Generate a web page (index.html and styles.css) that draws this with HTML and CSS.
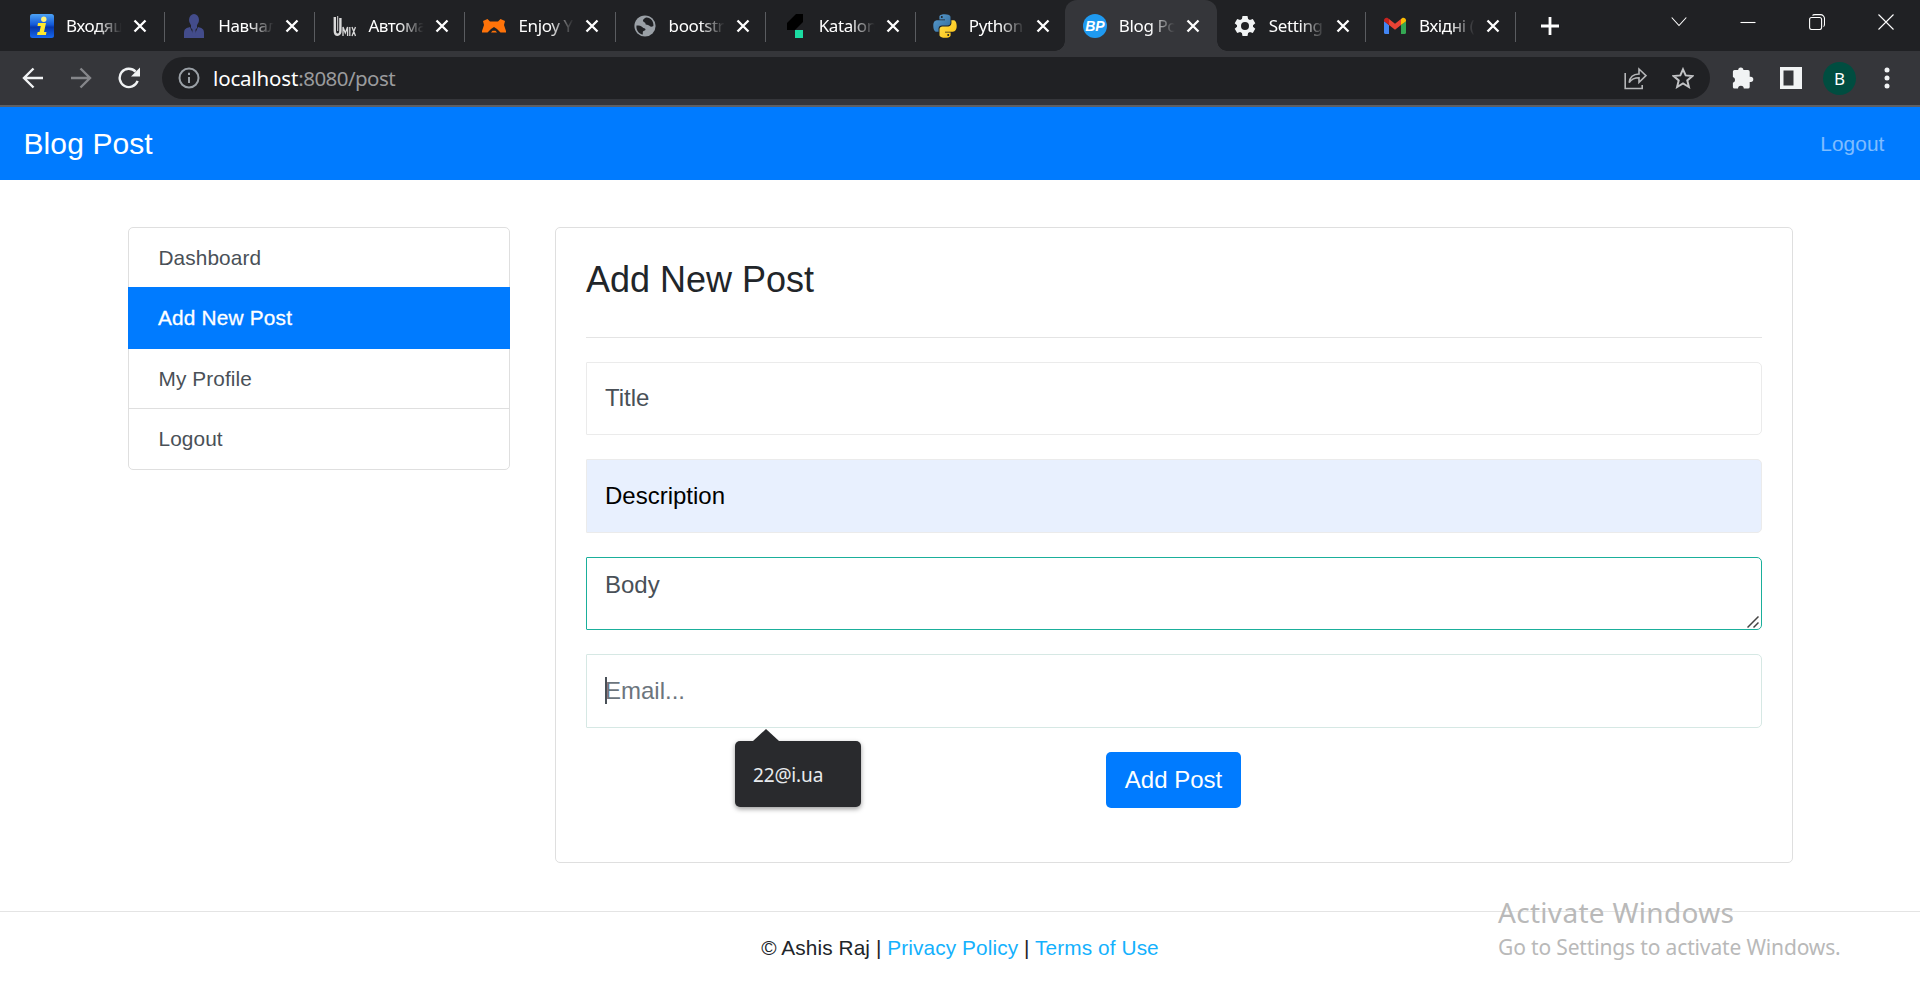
FILE: index.html
```html
<!DOCTYPE html>
<html lang="en">
<head>
<meta charset="utf-8">
<title>Blog Post</title>
<link rel="stylesheet" href="styles.css">
</head>
<body>
<header class="browser">
  <div class="tabstrip">
    <div class="tab tab-first">
      <svg class="favicon" viewBox="0 0 24 24"><defs><linearGradient id="ig" x1="0" y1="0" x2="0" y2="1"><stop offset="0" stop-color="#4da3f5"/><stop offset=".45" stop-color="#1258d8"/><stop offset=".55" stop-color="#0636a8"/><stop offset="1" stop-color="#1668f0"/></linearGradient></defs><rect width="24" height="24" rx="2.5" fill="url(#ig)"/><circle cx="13.8" cy="5.3" r="2.7" fill="#fff27a"/><path d="M8 9h8l-2 9h2.500l-.6 3H7l.7-3h1.800l1.300-6H7.500z" fill="#ffe92e"/></svg>
      <span class="tab-title">Входящ</span><svg class="close" viewBox="0 0 14 14"><path d="M1.500 1.500l11 11M12.500 1.500l-11 11"/></svg>
    </div>
    <div class="tab">
      <svg class="favicon" viewBox="0 0 24 24"><g fill="#434c8b"><ellipse cx="12" cy="6" rx="5" ry="6"/><path d="M9 9h6v5l-3 3-3-3z"/><path d="M2 24v-5c0-4 2-5 6-6l4 9 4-9c4 1 6 2 6 6v5z"/><path d="M10.800 14.500h2.400l1 7-2.200 2.500-2.200-2.500z"/></g></svg>
      <span class="tab-title">Навчал</span><svg class="close" viewBox="0 0 14 14"><path d="M1.500 1.500l11 11M12.500 1.500l-11 11"/></svg>
    </div>
    <div class="tab">
      <svg class="favicon" viewBox="0 0 24 24"><g fill="none" stroke="#d9d9d9"><path stroke-width="2.400" d="M2.800 3v14c0 5 5.600 5 5.600 0V4"/><path stroke-width="1" d="M5.700 2v15"/><path stroke-width="1.300" d="M11 22v-9l2.300 6 2.300-6v9M17.800 13v9M20 13l3.500 9M23.500 13L20 22"/></g></svg>
      <span class="tab-title">Автома</span><svg class="close" viewBox="0 0 14 14"><path d="M1.500 1.500l11 11M12.500 1.500l-11 11"/></svg>
    </div>
    <div class="tab">
      <svg class="favicon" viewBox="0 0 24 24"><path fill="#ff7309" d="M1 7l4.500-2 2.500 2.500h8L18.500 5 23 7l-1 4 2 6v1.500h-5.500L15 15l-3-2-3 2-3.500 3.500H0V17l2-6zM9 18.500l1.500-1.800h3L15 18.500z"/></svg>
      <span class="tab-title">Enjoy Y</span><svg class="close" viewBox="0 0 14 14"><path d="M1.500 1.500l11 11M12.500 1.500l-11 11"/></svg>
    </div>
    <div class="tab">
      <svg class="favicon" viewBox="0 0 24 24"><circle cx="12" cy="12" r="10.600" fill="#9aa0a6"/><path fill="#202124" d="M3.500 11.500c2.500 0 5 .3 6 1.800 1 1.300 3 .8 3 2.300s-2.700 1.200-2.700 2.700v2.300C6 20 2.800 16 3.500 11.500zM13 3.600c-2.500 1-3.700 3-2.700 4 1.200 1.200 2.200.8 2.200 2.200 0 1.800 3 .6 4.200 2.100.9 1.100 2.300.8 3.700.2C21 7 17 3 13 3.600z"/></svg>
      <span class="tab-title">bootstr</span><svg class="close" viewBox="0 0 14 14"><path d="M1.500 1.500l11 11M12.500 1.500l-11 11"/></svg>
    </div>
    <div class="tab">
      <svg class="favicon" viewBox="0 0 24 24"><path fill="#000" d="M4 9L13 0h7v8l-8 8H4z"/><path fill="#1bdca2" d="M12 16h8v8h-8z"/></svg>
      <span class="tab-title">Katalon</span><svg class="close" viewBox="0 0 14 14"><path d="M1.500 1.500l11 11M12.500 1.500l-11 11"/></svg>
    </div>
    <div class="tab tab-plain">
      <svg class="favicon" viewBox="0 0 24 24"><defs><linearGradient id="pyb" x2="1" y2="1"><stop stop-color="#5a9fd4"/><stop offset="1" stop-color="#306998"/></linearGradient><linearGradient id="pyy" x2="1" y2="1"><stop stop-color="#ffe04f"/><stop offset="1" stop-color="#fcc210"/></linearGradient></defs><path fill="url(#pyb)" d="M11.900.2C6 .2 6.400 2.800 6.400 2.800v2.700H12v.8H4.100S.3 5.900.3 11.900s3.300 5.800 3.300 5.800h2v-2.800s-.1-3.300 3.200-3.300h5.600s3.100.1 3.100-3V3.300S18 .2 11.900.2zM8.800 2a1 1 0 110 2 1 1 0 010-2z"/><path fill="url(#pyy)" d="M12.100 23.800c5.900 0 5.500-2.600 5.500-2.600v-2.700H12v-.8h7.900s3.800.4 3.800-5.600-3.300-5.800-3.300-5.800h-2v2.800s.1 3.300-3.200 3.300H9.600s-3.100-.1-3.100 3v5.300S6 23.800 12.100 23.800zm3.100-1.800a1 1 0 110-2 1 1 0 010 2z"/></svg>
      <span class="tab-title">Python</span><svg class="close" viewBox="0 0 14 14"><path d="M1.500 1.500l11 11M12.500 1.500l-11 11"/></svg>
    </div>
    <div class="tab tab-active">
      <span class="favicon bp">BP</span>
      <span class="tab-title">Blog Po</span><svg class="close" viewBox="0 0 14 14"><path d="M1.500 1.500l11 11M12.500 1.500l-11 11"/></svg>
    </div>
    <div class="tab">
      <svg class="favicon" viewBox="0 0 24 24"><path fill="#f1f3f4" fill-rule="evenodd" d="M9.500 2h5l.6 3 1.800 1 2.900-1 2.500 4.200-2.300 2v1.600l2.300 2-2.500 4.200-2.900-1-1.800 1-.6 3h-5l-.6-3-1.800-1-2.900 1-2.500-4.200 2.300-2v-1.600l-2.300-2L4.200 5l2.900 1 1.800-1zM12 8a4 4 0 100 8 4 4 0 000-8z"/></svg>
      <span class="tab-title">Setting</span><svg class="close" viewBox="0 0 14 14"><path d="M1.500 1.500l11 11M12.500 1.500l-11 11"/></svg>
    </div>
    <div class="tab">
      <svg class="favicon" viewBox="0 0 24 24"><path fill="#4285f4" d="M1 7l5 4v9H2.500A1.500 1.500 0 011 18.500z"/><path fill="#34a853" d="M23 7l-5 4v9h3.500a1.500 1.500 0 001.500-1.500z"/><path fill="#ea4335" d="M6 5l6 4.700L18 5v6l-6 4.700L6 11z"/><path fill="#c5221f" d="M1 6.500C1 4 3.500 3.100 5 4.200L6 5v6L1 7.300z"/><path fill="#fbbc04" d="M23 6.500c0-2.500-2.500-3.400-4-2.300L18 5v6l5-3.700z"/></svg>
      <span class="tab-title">Вхідні (</span><svg class="close" viewBox="0 0 14 14"><path d="M1.500 1.500l11 11M12.500 1.500l-11 11"/></svg>
    </div>
    <svg class="newtab" viewBox="0 0 18 18"><path d="M9 0v18M0 9h18"/></svg>
    <div class="winbtns">
      <svg viewBox="0 0 16 16"><path d="M.7 3.500L8 11.500l7.300-8"/></svg>
      <svg viewBox="0 0 16 16"><path d="M.5 8.500h15"/></svg>
      <svg viewBox="0 0 16 16"><rect x=".6" y="3.500" width="12" height="12" rx="2"/><path d="M3.500 1.500Q4 .6 6 .6h5.500a4 4 0 014 4V10q0 2-1 2.600"/></svg>
      <svg viewBox="0 0 16 16"><path d="M.5.500l15 15M15.500.500l-15 15"/></svg>
    </div>
  </div>
  <div class="toolbar">
    <svg class="nav-ic" viewBox="0 0 22 22"><path d="M21 11H2.500M11.500 1.500L2 11l9.500 9.500"/></svg>
    <svg class="nav-ic dim" viewBox="0 0 22 22"><path d="M1 11h18.500M10.500 1.500L20 11l-9.500 9.500"/></svg>
    <svg class="nav-ic" viewBox="0 0 22 22"><path d="M19.600 13.800A9.200 9.200 0 1 1 17.600 4.600"/><path d="M22 .5V9.500h-9z" fill="#f1f3f4" stroke="none"/></svg>
    <div class="omnibox">
      <svg class="info" viewBox="0 0 22 22"><circle cx="11" cy="11" r="9.500"/><path d="M11 10v6M11 5.800v2.300"/></svg>
      <span class="url"><b>localhost</b>:8080/post</span>
      <svg class="share" viewBox="0 0 23 23"><path d="M1.200 6v15.500h17V18M5.200 15.500c.6-5.500 4-8.300 9.800-8.500V2l7 6.700-7 6.600v-4.600c-4.500 0-7.500 1.300-9.800 4.800z"/></svg>
      <svg class="star" viewBox="0 0 22 22"><path d="M11 2.300l2.700 6.100 6.700.6-5.100 4.400 1.600 6.600-5.900-3.500L5.100 20l1.600-6.600L1.600 9l6.700-.6z"/></svg>
    </div>
    <svg class="ext" viewBox="0 0 22 22"><path fill="#f1f3f4" d="M2.500 3H6.200a2.600 2.600 0 015.200 0h4.600A1.700 1.700 0 0117.700 4.700V9.700h1a2.600 2.600 0 010 5.200h-1v5a1.700 1.700 0 01-1.700 1.700h-4.200a2.900 2.900 0 00-5.800 0H2.500A1.600 1.600 0 01.900 20v-4.300a2.900 2.900 0 000-5.600V4.600A1.600 1.600 0 012.500 3z"/></svg>
    <svg class="panel" viewBox="0 0 22 22"><path fill="#f1f3f4" fill-rule="evenodd" d="M0 0h22v22H0zM3.500 3.500v15h10v-15z"/></svg>
    <span class="avatar">B</span>
    <svg class="dots" viewBox="0 0 6 22"><g fill="#f1f3f4"><circle cx="3" cy="3" r="2.500"/><circle cx="3" cy="11" r="2.500"/><circle cx="3" cy="19" r="2.500"/></g></svg>
  </div>
</header>
<nav class="navbar"><a class="brand">Blog Post</a><a class="nav-link">Logout</a></nav>
<main class="content">
  <ul class="side">
    <li>Dashboard</li>
    <li class="active">Add New Post</li>
    <li>My Profile</li>
    <li>Logout</li>
  </ul>
  <section class="card">
    <h3>Add New Post</h3>
    <form class="form">
      <input class="field title" value="Title">
      <input class="field filled" value="Description">
      <div class="area-wrap">
        <textarea class="field area">Body</textarea>
        <svg class="grip" viewBox="0 0 12 12"><path d="M.5 11.500l11-11M6.500 11.500l5-5"/></svg>
      </div>
      <div class="email-wrap">
        <input class="field email" placeholder="Email...">
        <i class="caret"></i>
        <div class="suggest">22@i.ua</div>
      </div>
      <button class="btn" type="button">Add Post</button>
    </form>
  </section>
</main>
<footer class="footer">© Ashis Raj | <a>Privacy Policy</a> | <a>Terms of Use</a></footer>
<aside class="watermark"><p class="wm-title">Activate Windows</p><p class="wm-sub">Go to Settings to activate Windows.</p></aside>
</body>
</html>
```
FILE: styles.css
```css
* { box-sizing: border-box; }
body {
  margin: 0;
  height: 1008px;
  overflow: hidden;
  position: relative;
  background: #fff;
  color: #212529;
  font: 20.800px/30px "Liberation Sans", Arial, sans-serif;
  letter-spacing: .1px;
}
svg { display: block; flex: none; fill: none; }

/* Browser window */
.browser {
  font-family: "Noto Sans", "Open Sans", sans-serif;
  letter-spacing: 0;
  background: #202124;
}
.tabstrip { display: flex; height: 51px; padding-left: 13px; }
.tab {
  display: flex;
  align-items: center;
  flex: none;
  width: 150.1px;
  padding-left: 17px;
  position: relative;
}
.tab-first { width: 152.300px; }
.tab::after {
  content: "";
  position: absolute;
  right: 0;
  top: 12px;
  width: 1px;
  height: 30px;
  background: #5a5c60;
}
.tab-plain::after { display: none; }
.tab-active {
  background: #35363a;
  border-radius: 12px 12px 0 0;
  width: 152px;
  margin: 0 -1.500px 0 -.5px;
  padding-left: 17.500px;
}
.tab-active::before, .tab-active::after {
  content: "";
  position: absolute;
  top: auto;
  bottom: 0;
  width: 10px;
  height: 10px;
}
.tab-active::before { left: -10px; background: radial-gradient(circle at 0 0, transparent 9.5px, #35363a 10px); }
.tab-active::after { right: -10px; background: radial-gradient(circle at 100% 0, transparent 9.5px, #35363a 10px); }
.favicon { width: 24px; height: 24px; flex: none; }
.bp {
  border-radius: 50%;
  background: #1f9af0;
  color: #fff;
  font: italic bold 14px/24px "Liberation Sans", sans-serif;
  text-align: center;
}
.tab-title {
  width: 62px;
  margin-left: 12px;
  white-space: nowrap;
  color: #fff;
  font-size: 17px;
  line-height: 24px;
  letter-spacing: -.4px;
  -webkit-mask-image: linear-gradient(90deg, #000 50%, transparent 90%);
  mask-image: linear-gradient(90deg, #000 50%, transparent 90%);
}
.close { width: 14px; height: 14px; margin-left: 5px; stroke: #fff; stroke-width: 2.300; }
.newtab { width: 18px; height: 18px; margin: 17px 0 0 24.500px; stroke: #fff; stroke-width: 2.800; }
.winbtns { display: flex; gap: 53px; margin: 14px 26.500px 0 auto; }
.winbtns svg { width: 16px; height: 16px; stroke: #fff; stroke-width: 1.100; }
.toolbar {
  display: flex;
  align-items: center;
  height: 56px;
  padding-left: 22px;
  background: #35363a;
  border-bottom: 2px solid #5f6063;
}
.nav-ic { width: 22px; height: 22px; margin-right: 26px; stroke: #f1f3f4; stroke-width: 2.400; }
.dim { stroke: #85868a; }
.omnibox {
  display: flex;
  align-items: center;
  width: 1548px;
  height: 42px;
  margin-left: -4px;
  padding: 0 16px;
  border-radius: 21px;
  background: #202124;
}
.info { width: 22px; height: 22px; stroke: #9aa0a6; stroke-width: 2; }
.url { margin-left: 13px; color: #9a9b9d; font-size: 20.500px; letter-spacing: -.55px; }
.url b { color: #fff; font-weight: 400; letter-spacing: -.15px; }
.share { width: 23px; height: 23px; margin-left: auto; stroke: #b5b6b8; stroke-width: 1.600; }
.star { width: 22px; height: 22px; margin-left: 25px; stroke: #c2c3c5; stroke-width: 2; }
.ext { width: 22px; height: 22px; margin-left: 22px; }
.panel { width: 22px; height: 22px; margin-left: 26px; }
.avatar {
  width: 33px;
  height: 33px;
  margin-left: 21px;
  border-radius: 50%;
  background: #004d40;
  color: #fff;
  font-size: 17px;
  line-height: 33px;
  text-align: center;
}
.dots { width: 6px; height: 22px; margin-left: 28px; }

/* Page */
.navbar {
  display: flex;
  align-items: center;
  justify-content: space-between;
  height: 73px;
  padding: 0 35.500px 0 23.500px;
  background: #007bff;
}
.brand { color: #fff; font-size: 30px; }
.nav-link { color: rgba(255, 255, 255, .5); }
.content {
  display: flex;
  align-items: flex-start;
  gap: 45px;
  padding: 47px 127px 0 128px;
}
.side {
  width: 382px;
  margin: 0;
  padding: 0;
  list-style: none;
  border: 1px solid #dfdfdf;
  border-radius: 5px;
  background: #fff;
  color: #495057;
}
.side li { height: 60px; padding: 15px 29.500px 0; }
.side li:nth-child(3) { height: 59px; }
.side li:last-child { border-top: 1px solid #dfdfdf; height: 61px; }
.side .active {
  height: 62px;
  margin: -1px -1px 0;
  padding: 16px 30px 0;
  background: #007bff;
  color: #fff;
  letter-spacing: .2px;
  -webkit-text-stroke: .3px #fff;
}
.card {
  flex: 1;
  height: 636px;
  padding: 30px;
  border: 1px solid #dfdfdf;
  border-radius: 5px;
  background: #fff;
}
h3 {
  height: 80px;
  margin: 0;
  border-bottom: 1px solid #e4e4e4;
  font-size: 36px;
  font-weight: 400;
  line-height: 43px;
  letter-spacing: 0;
}
.form { display: flex; flex-direction: column; gap: 24px; padding-top: 24px; }
.field {
  display: block;
  width: 100%;
  height: 73px;
  margin: 0;
  padding: 0 18px;
  border: 1px solid #ebebeb;
  border-radius: 1px 5px 5px 1px;
  outline: 0;
  background: #fff;
  color: #495057;
  font: 24px/36px "Liberation Sans", Arial, sans-serif;
}
.title { padding-bottom: 2px; }
.filled { height: 74px; background: #e8f0fe; color: #000; }
.area-wrap, .email-wrap { position: relative; }
.area { padding-top: 9px; border-color: #1aaf9b; resize: none; overflow: hidden; }
.grip { position: absolute; right: 3px; bottom: 2px; width: 12px; height: 12px; stroke: #444; stroke-width: 1.500; }
.email { height: 74px; border-color: #d6e8e4; }
.email::placeholder { color: #6c757d; opacity: 1; }
.caret { position: absolute; left: 19px; top: 23px; width: 2px; height: 27px; background: #495057; }
.suggest {
  position: absolute;
  left: 149px;
  top: 87px;
  width: 126px;
  height: 66px;
  padding-left: 18px;
  border-radius: 5px;
  background: #292a2d;
  box-shadow: 0 2px 5px rgba(0, 0, 0, .4);
  color: #e8eaed;
  font: 19px/68px "Noto Sans", sans-serif;
  letter-spacing: -.15px;
}
.suggest::before {
  content: "";
  position: absolute;
  left: 18px;
  top: -12px;
  border: solid transparent;
  border-width: 0 13px 12px;
  border-bottom-color: #292a2d;
}
.btn {
  align-self: center;
  width: 135px;
  height: 56px;
  margin-right: 1px;
  padding: 0;
  border: 0;
  border-radius: 5px;
  background: #007bff;
  color: #fff;
  font: 24px/56px "Liberation Sans", Arial, sans-serif;
}
.footer {
  margin-top: 48px;
  padding-top: 21px;
  border-top: 1px solid #e4e4e4;
  text-align: center;
}
.footer a { color: #14b1fd; }
.watermark {
  position: absolute;
  left: 1498px;
  top: 892px;
  color: #b9b9b9;
  font-family: "Noto Sans", "Open Sans", sans-serif;
  white-space: nowrap;
}
.watermark p { margin: 0; }
.wm-title { font-size: 28px; line-height: 40px; letter-spacing: .3px; }
.wm-sub { font-size: 21px; line-height: 30px; letter-spacing: -.15px; }
```
